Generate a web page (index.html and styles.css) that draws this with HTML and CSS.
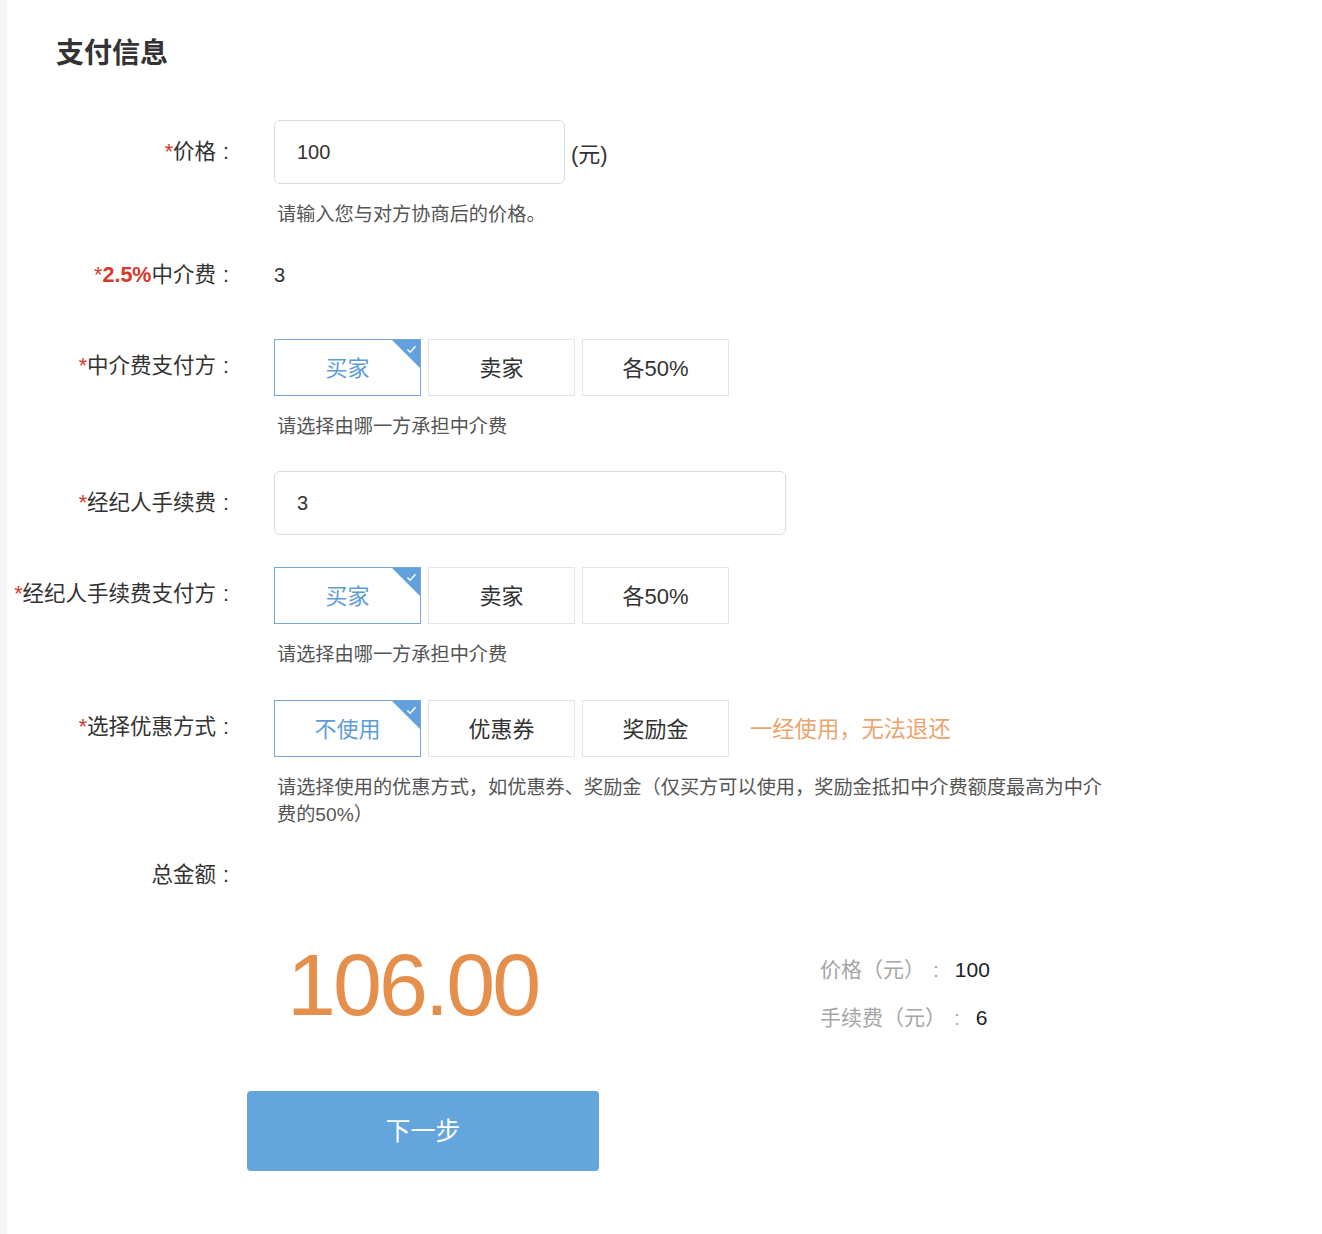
FILE: index.html
```html
<!DOCTYPE html>
<html lang="zh-CN">
<head>
<meta charset="utf-8">
<title>支付信息</title>
<link rel="stylesheet" href="styles.css">
</head>
<body>
<div class="page">
  <h1 class="title">支付信息</h1>
  <div class="form">
    <div class="row r1">
      <div class="label lh-input"><span class="req">*</span>价格<span class="colon">:</span></div>
      <div class="field">
        <div class="line"><div class="input w-sm">100</div><span class="unit">(元)</span></div>
        <p class="hint">请输入您与对方协商后的价格。</p>
      </div>
    </div>

    <div class="row r2">
      <div class="label lh-text"><span class="req">*<b>2.5%</b></span>中介费<span class="colon">:</span></div>
      <div class="field"><div class="value">3</div></div>
    </div>

    <div class="row r3">
      <div class="label lh-opt"><span class="req">*</span>中介费支付方<span class="colon">:</span></div>
      <div class="field">
        <div class="opts">
          <div class="opt on">买家<svg class="tick" viewBox="0 0 12 10" width="11" height="9"><path d="M1.5 5 L4.5 8 L10.5 1.5" fill="none" stroke="#fff" stroke-width="1.6"/></svg></div>
          <div class="opt">卖家</div>
          <div class="opt">各50%</div>
        </div>
        <p class="hint">请选择由哪一方承担中介费</p>
      </div>
    </div>

    <div class="row r4">
      <div class="label lh-input"><span class="req">*</span>经纪人手续费<span class="colon">:</span></div>
      <div class="field"><div class="input w-lg">3</div></div>
    </div>

    <div class="row r5">
      <div class="label lh-opt"><span class="req">*</span>经纪人手续费支付方<span class="colon">:</span></div>
      <div class="field">
        <div class="opts">
          <div class="opt on">买家<svg class="tick" viewBox="0 0 12 10" width="11" height="9"><path d="M1.5 5 L4.5 8 L10.5 1.5" fill="none" stroke="#fff" stroke-width="1.6"/></svg></div>
          <div class="opt">卖家</div>
          <div class="opt">各50%</div>
        </div>
        <p class="hint">请选择由哪一方承担中介费</p>
      </div>
    </div>

    <div class="row r6">
      <div class="label lh-opt"><span class="req">*</span>选择优惠方式<span class="colon">:</span></div>
      <div class="field">
        <div class="line">
          <div class="opts">
            <div class="opt on">不使用<svg class="tick" viewBox="0 0 12 10" width="11" height="9"><path d="M1.5 5 L4.5 8 L10.5 1.5" fill="none" stroke="#fff" stroke-width="1.6"/></svg></div>
            <div class="opt">优惠券</div>
            <div class="opt">奖励金</div>
          </div>
          <span class="warn">一经使用，无法退还</span>
        </div>
        <p class="hint">请选择使用的优惠方式，如优惠券、奖励金（仅买方可以使用，奖励金抵扣中介费额度最高为中介费的50%）</p>
      </div>
    </div>

    <div class="row r7">
      <div class="label lh-text">总金额<span class="colon">:</span></div>
      <div class="field"></div>
    </div>
  </div>

  <div class="total">
    <div class="amount">106.00</div>
    <div class="summary">
      <div class="sum-line"><span class="sum-k">价格（元）</span><span class="sum-c">:</span><span class="sum-v">100</span></div>
      <div class="sum-line"><span class="sum-k">手续费（元）</span><span class="sum-c">:</span><span class="sum-v">6</span></div>
    </div>
  </div>

  <button class="next" type="button">下一步</button>
</div>
</body>
</html>
```

FILE: styles.css
```css
html, body {
  margin: 0;
  padding: 0;
  background: #fff;
}

body {
  font-family: "Liberation Sans", "Noto Sans CJK SC", sans-serif;
  color: #333;
}

.page {
  border-left: 7px solid #f5f5f5;
  min-height: 1234px;
  box-sizing: border-box;
  padding-top: 34px;
}

.title {
  margin: 0 0 0 49px;
  font-size: 28px;
  line-height: 40px;
  font-weight: bold;
  color: #333;
}

.form {
  margin-top: 46px;
}

.row {
  display: grid;
  grid-template-columns: 222px 1fr;
  column-gap: 45px;
  align-items: start;
}

.r2 { margin-top: 27px; }
.r3 { margin-top: 44px; }
.r4 { margin-top: 31px; }
.r5 { margin-top: 32px; }
.r6 { margin-top: 32px; }
.r7 { margin-top: 27px; }

.label {
  text-align: right;
  font-size: 21.5px;
  color: #333;
  white-space: nowrap;
}

.lh-input { line-height: 64px; }
.lh-opt { line-height: 54px; }
.lh-text { line-height: 40px; }

.colon {
  margin-left: 7px;
}

.req {
  color: #d8392c;
}

.req b {
  font-weight: bold;
}

.line {
  display: flex;
  align-items: center;
}

.input {
  box-sizing: border-box;
  height: 64px;
  border: 1px solid #dcdcdc;
  border-radius: 6px;
  padding-left: 22px;
  font-size: 20px;
  line-height: 62px;
  color: #333;
  background: #fff;
}

.w-sm { width: 291px; }
.w-lg { width: 512px; }

.unit {
  margin-left: 6px;
  font-size: 22px;
  color: #333;
}

.value {
  line-height: 40px;
  font-size: 20px;
  color: #333;
}

.hint {
  margin: 18px 0 0 3px;
  font-size: 19.2px;
  line-height: 26px;
  color: #555;
}

.r6 .hint {
  margin-top: 17px;
  line-height: 27px;
  width: 834px;
}

.opts {
  display: flex;
  gap: 7px;
}

.opt {
  position: relative;
  box-sizing: border-box;
  width: 147px;
  height: 57px;
  padding-bottom: 4px;
  border: 1px solid #e4e4e4;
  display: flex;
  align-items: center;
  justify-content: center;
  font-size: 22px;
  color: #333;
  background: #fff;
  overflow: hidden;
}

.opt.on {
  border-color: #74a7da;
  color: #5e9cd8;
}

.opt.on::after {
  content: "";
  position: absolute;
  top: 0;
  right: 0;
  width: 0;
  height: 0;
  border-top: 28px solid #62a1de;
  border-left: 28px solid transparent;
}

.tick {
  position: absolute;
  top: 5px;
  right: 3px;
  z-index: 1;
}

.warn {
  margin-left: 21px;
  padding-bottom: 3px;
  font-size: 22.3px;
  color: #eca46d;
}

.total {
  display: flex;
  align-items: flex-start;
  margin-top: 35px;
}

.amount {
  margin-left: 280px;
  width: 533px;
  font-size: 88px;
  line-height: 110px;
  letter-spacing: -3px;
  color: #e48f4b;
}

.summary {
  padding-top: 16px;
}

.sum-line {
  line-height: 48px;
  font-size: 21px;
  white-space: nowrap;
}

.sum-k {
  color: #a6a6a6;
}

.sum-c {
  color: #a6a6a6;
  margin-left: 8px;
}

.sum-v {
  margin-left: 16px;
  color: #222;
}

.next {
  display: block;
  margin: 49px 0 0 240px;
  width: 352px;
  height: 80px;
  padding: 0 0 4px;
  border: none;
  border-radius: 4px;
  background: #64a5db;
  color: #fff;
  font-family: "Liberation Sans", "Noto Sans CJK SC", sans-serif;
  font-size: 25px;
  cursor: pointer;
}
```
